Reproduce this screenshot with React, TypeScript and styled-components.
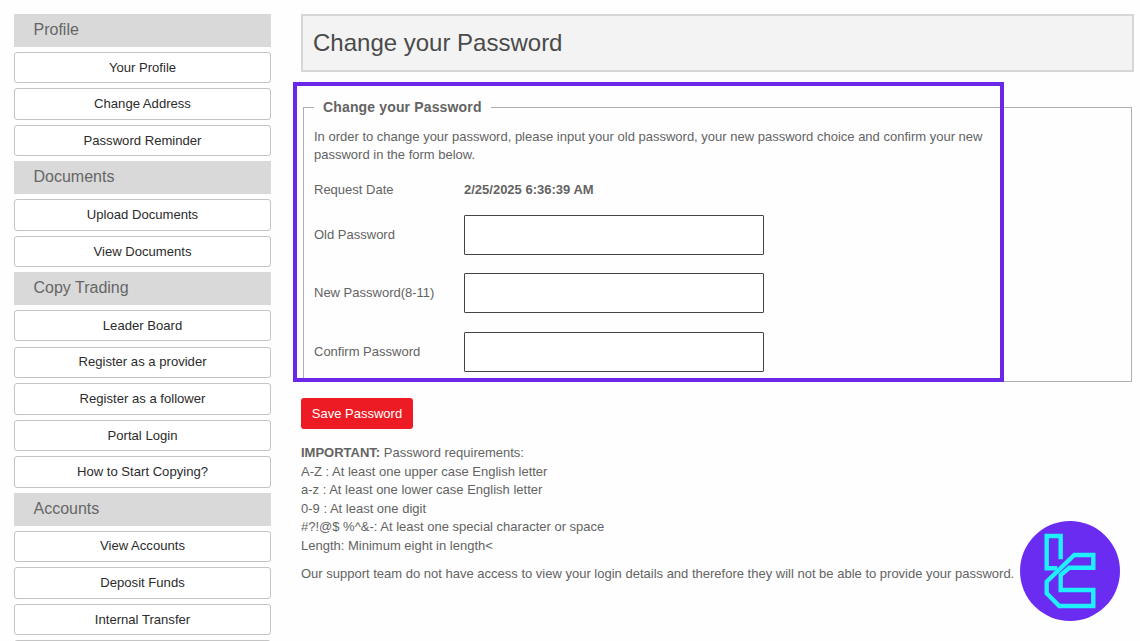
import styled, { createGlobalStyle } from "styled-components";

const GlobalStyle = createGlobalStyle`
  html, body {
    margin: 0;
    padding: 0;
    background: #fefefe;
    overflow: hidden;
  }
  * {
    box-sizing: border-box;
  }
`;
const Page = styled.div`
  position: relative;
  display: flex;
  height: 641px;
  overflow: hidden;
  padding: 14px 6px 0 14px;
  font-family: "Liberation Sans", Arial, sans-serif;
  color: #636363;
`;
const Sidebar = styled.nav`
  width: 257px;
  flex-shrink: 0;
  margin-right: 30px;
`;
const SideHeading = styled.div`
  height: 33px;
  padding: 5px 0 0 19.5px;
  margin-bottom: 4.7px;
  background: #d9d9d9;
  font-size: 16px;
  line-height: 22px;
  color: #666;
`;
const SideLink = styled.a`
  display: flex;
  align-items: center;
  justify-content: center;
  height: 31.4px;
  margin-bottom: 5.2px;
  padding-bottom: 0.5px;
  background: #fff;
  border: 1px solid #c4c4c4;
  border-radius: 3px;
  font-size: 13.1px;
  color: #2b2b2b;
`;
const Main = styled.main`
  width: 833px;
  flex-shrink: 0;
`;
const TitleBar = styled.div`
  height: 58px;
  padding-left: 10px;
  margin-bottom: 35px;
  background: #f3f3f3;
  border: 2px solid #d6d6d6;
  font-size: 24px;
  line-height: 54px;
  color: #4a4a4a;
`;
const Fieldset = styled.fieldset`
  height: 283px;
  margin: -8px 2px 0;
  padding: 0 10px;
  border: 1px solid #aeaeae;
`;
const Legend = styled.legend`
  margin-left: 0;
  padding: 0 9px;
  font-size: 14px;
  font-weight: 700;
  letter-spacing: 0.15px;
  line-height: 17px;
  color: #636363;
`;
const Intro = styled.p`
  margin: 12px 0 0;
  width: 680px;
  font-size: 13px;
  line-height: 18px;
`;
const DateRow = styled.div`
  display: grid;
  grid-template-columns: 150px 1fr;
  margin-top: 17px;
  font-size: 13px;
  line-height: 18px;
`;
const DateValue = styled.span`
  font-weight: 700;
`;
const FormRow = styled.label<{ $top: number }>`
  display: grid;
  grid-template-columns: 150px 300px;
  align-items: center;
  margin-top: ${(p) => p.$top}px;
  font-size: 13px;
`;
const FieldName = styled.span`
  padding-bottom: 2px;
`;
const TextInput = styled.input`
  height: 40px;
  background: #fff;
  border: 1px solid #444;
  border-radius: 1px;
`;
const SaveButton = styled.button`
  display: block;
  width: 112px;
  height: 31px;
  margin: 16px 0 15px;
  padding: 0 0 1px;
  background: #ed1c24;
  border: 0;
  border-radius: 3px;
  font-family: inherit;
  font-size: 13px;
  color: #fff;
`;
const Requirements = styled.div`
  font-size: 13px;
  line-height: 18.6px;
`;
const Support = styled.p`
  margin: 9px 0 0;
  font-size: 13px;
  line-height: 18px;
  white-space: nowrap;
`;
const Highlight = styled.div`
  position: absolute;
  left: 293px;
  top: 82px;
  width: 711px;
  height: 300px;
  border: 4px solid #6a27e8;
  pointer-events: none;
`;
const Logo = styled.svg`
  position: absolute;
  left: 1020px;
  top: 521px;
  width: 100px;
  height: 100px;
`;

const menu = [
  { title: "Profile", links: ["Your Profile", "Change Address", "Password Reminder"] },
  { title: "Documents", links: ["Upload Documents", "View Documents"] },
  {
    title: "Copy Trading",
    links: ["Leader Board", "Register as a provider", "Register as a follower", "Portal Login", "How to Start Copying?"],
  },
  // the last button is cut off by the window, only its top border shows
  { title: "Accounts", links: ["View Accounts", "Deposit Funds", "Internal Transfer", ""] },
];

const App = () => {
  return (
    <Page>
      <GlobalStyle />
      <Sidebar>
        {menu.map((group) => (
          <div key={group.title}>
            <SideHeading>{group.title}</SideHeading>
            {group.links.map((link) => (
              <SideLink key={link}>{link}</SideLink>
            ))}
          </div>
        ))}
      </Sidebar>
      <Main>
        <TitleBar>Change your Password</TitleBar>
        <Fieldset>
          <Legend>Change your Password</Legend>
          <Intro>
            In order to change your password, please input your old password, your new password choice and confirm your
            new password in the form below.
          </Intro>
          <DateRow>
            <span>Request Date</span>
            <DateValue>2/25/2025 6:36:39 AM</DateValue>
          </DateRow>
          <FormRow $top={16}>
            <FieldName>Old Password</FieldName>
            <TextInput type="password" />
          </FormRow>
          <FormRow $top={18}>
            <FieldName>New Password(8-11)</FieldName>
            <TextInput type="password" />
          </FormRow>
          <FormRow $top={19}>
            <FieldName>Confirm Password</FieldName>
            <TextInput type="password" />
          </FormRow>
        </Fieldset>
        <SaveButton>Save Password</SaveButton>
        <Requirements>
          <strong>IMPORTANT:</strong> Password requirements:
          <br />
          A-Z : At least one upper case English letter
          <br />
          a-z : At least one lower case English letter
          <br />
          0-9 : At least one digit
          <br />
          #?!@$ %^&-: At least one special character or space
          <br />
          Length: Minimum eight in length&lt;
        </Requirements>
        <Support>
          Our support team do not have access to view your login details and therefore they will not be able to provide
          your password.
        </Support>
      </Main>
      <Highlight />
      <Logo viewBox="0 0 100 100">
        <circle cx="50" cy="50" r="50" fill="#6a2cf0" />
        <g fill="none" stroke="#1ff0ff" strokeWidth="4.4">
          <path d="M40.7 38.3V15H26.7V47.3H37.3" />
          <path d="M73.3 34H54.3L26.7 60.7V72.3L39.3 85H73.3V69H40.7V54L49.3 46.7H73.3Z" />
        </g>
      </Logo>
    </Page>
  );
};

export default App;
